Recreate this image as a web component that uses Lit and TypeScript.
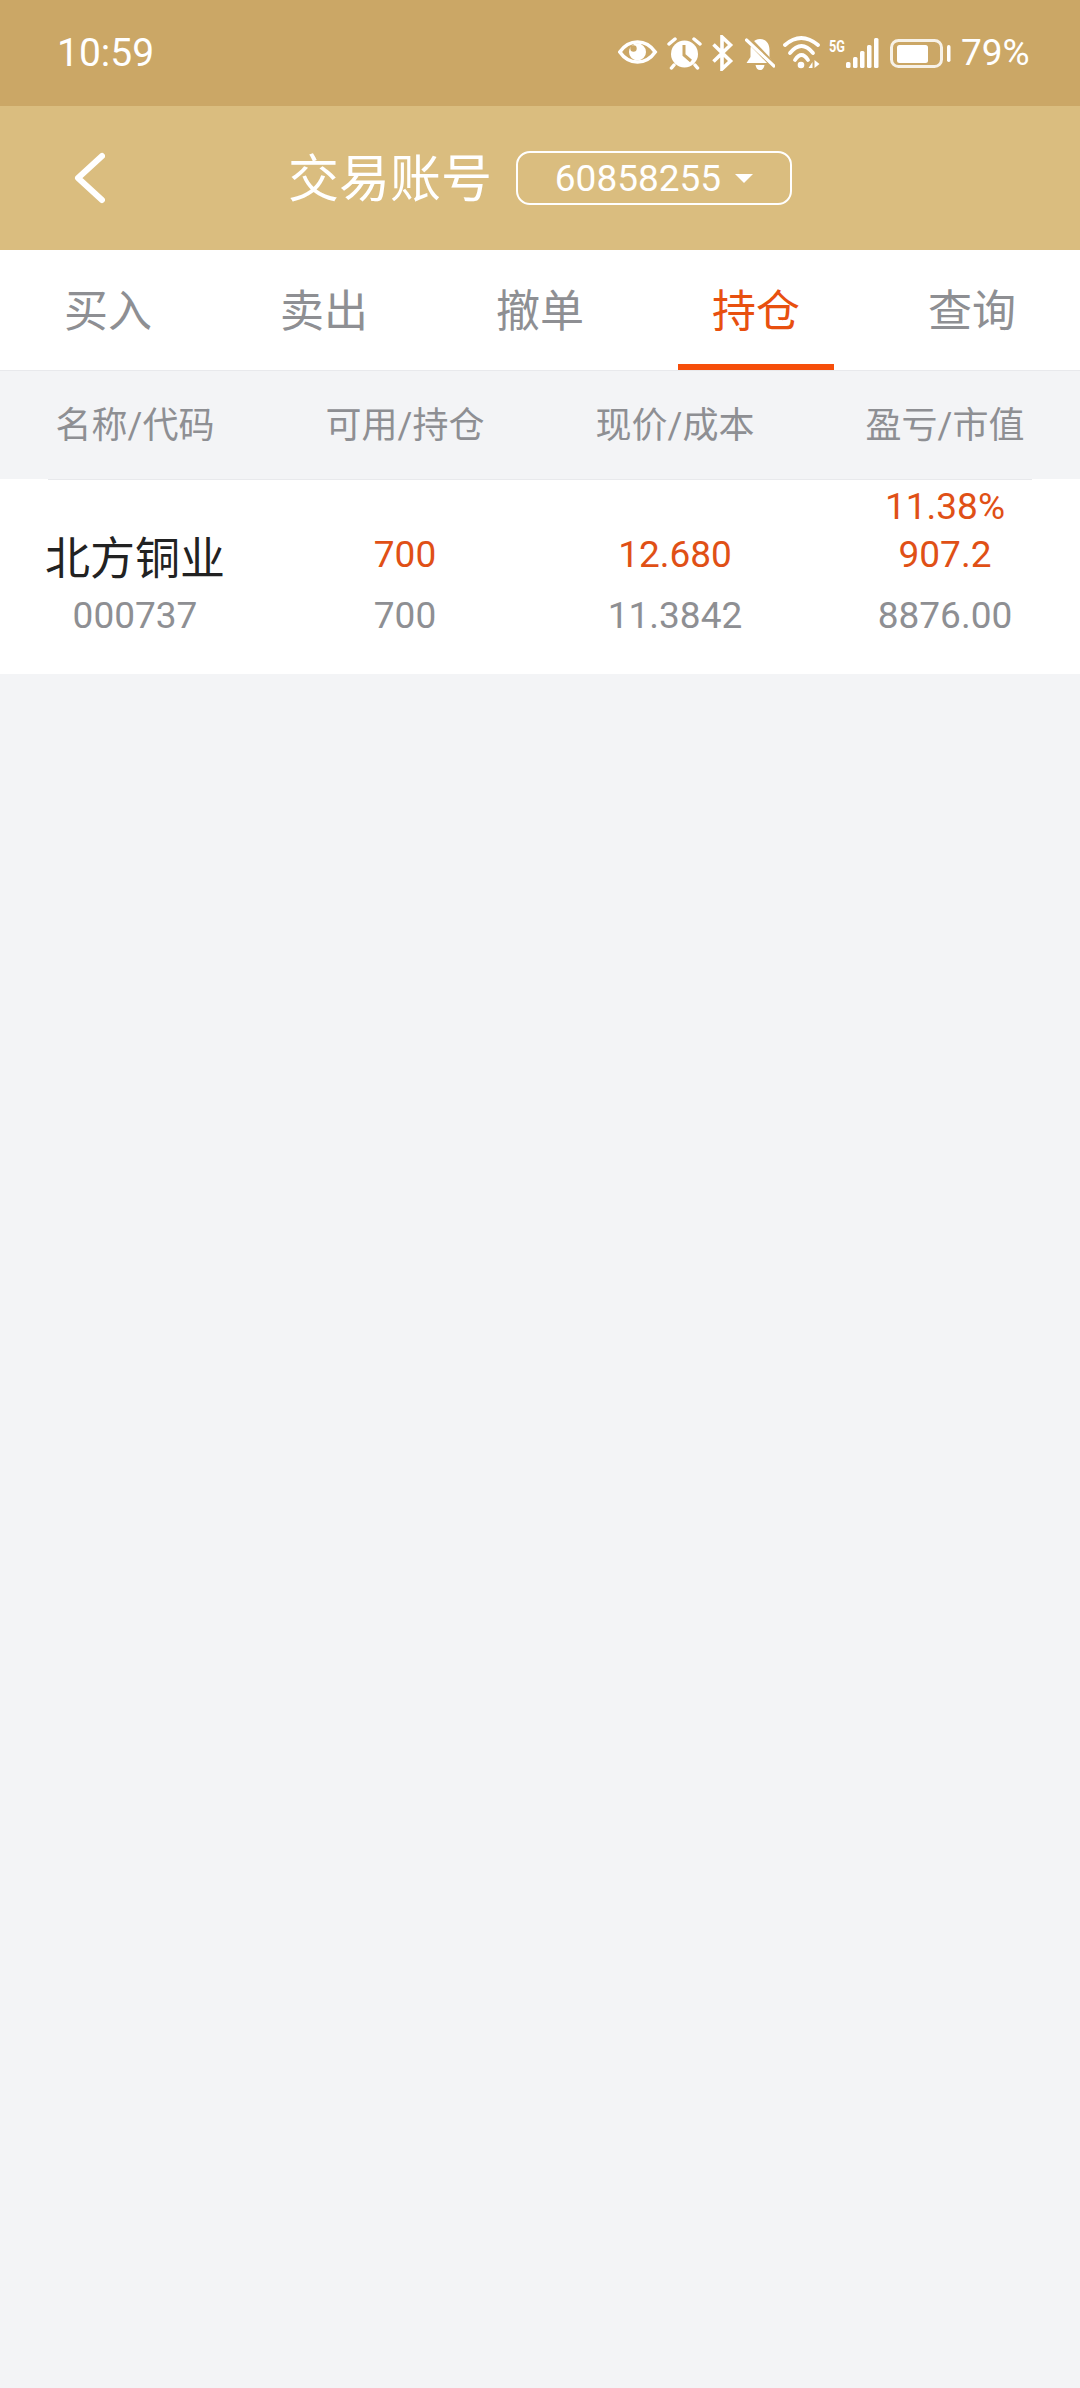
import { LitElement, html, css, svg } from "lit";
import { customElement } from "lit/decorators.js";

const eye = svg`<path d="M1.800 17C7 9.500 13 7 19.500 7S32 9.500 37.200 17C32 24.500 26 27 19.500 27S7 24.500 1.800 17Z" fill="none" stroke="#fff" stroke-width="3.600"/><circle cx="19.500" cy="17" r="8.500" fill="#fff"/><circle cx="15.500" cy="13.500" r="3.200" fill="#cba766"/>`;
const alarm = svg`<circle cx="17.500" cy="19" r="13.500" fill="#fff"/><path d="M17 10V20L24 26" fill="none" stroke="#cba766" stroke-width="3"/><path d="M2 9 8 4M27 4 33 9M7 30 4.500 33M28 30 30.500 33" stroke="#fff" stroke-width="3.500" stroke-linecap="round"/>`;
const bt = svg`<path d="M2.500 9.500 19.500 26 11 34V2L19.500 10 2.500 26.500" fill="none" stroke="#fff" stroke-width="3.600"/>`;
const bell = svg`<path d="M15 4C8.500 4 5.500 9 5.500 15V22L1.500 28H28.500L24.500 22V15C24.500 9 21.500 4 15 4Z" fill="#fff"/><path d="M10.500 30H19.500C19 33 17.500 35 15 35S11 33 10.500 30Z" fill="#fff"/><path d="M1 2 30 32" stroke="#cba766" stroke-width="6"/><path d="M1.500 5 29 31" stroke="#fff" stroke-width="3.200" stroke-linecap="round"/>`;
const wifi = svg`<g fill="none" stroke="#fff" stroke-width="3.800" stroke-linecap="round"><path d="M2 10Q18 -4 35 10"/><path d="M7 18Q18.500 4 30 18"/><path d="M12 25Q18.500 15 25 25"/></g><circle cx="18" cy="30" r="3.300" fill="#fff"/><path d="M29.500 27 25.500 33H29.500ZM31.500 25V33L36.500 29Z" fill="#fff"/>`;
const signal = svg`<text x="0" y="17" font-family="Roboto, sans-serif" font-size="16" font-weight="700" fill="#fff" textLength="16" lengthAdjust="spacingAndGlyphs">5G</text><g fill="#fff"><rect x="17" y="27" width="4.500" height="6" rx="1.500"/><rect x="24" y="22" width="4.500" height="11" rx="1.500"/><rect x="31" y="16" width="4.500" height="17" rx="1.500"/><rect x="38" y="10" width="4.500" height="23" rx="1.500"/><rect x="45" y="3" width="4.500" height="30" rx="1.500"/></g>`;
const battery = svg`<rect x="1.500" y="5.500" width="50" height="26" rx="7" fill="none" stroke="#fff" stroke-width="3" opacity=".85"/><rect x="7" y="10" width="31" height="18" rx="2.500" fill="#fff"/><rect x="57" y="10" width="3.500" height="17" rx="1.700" fill="#fff"/>`;

const icon = (w: number, body: unknown) =>
  html`<svg width=${w} height="36" viewBox="0 0 ${w} 36">${body}</svg>`;

@customElement("app-root")
export class AppRoot extends LitElement {
  static styles = css`
    :host {
      display: block;
      min-height: 2388px;
      background: #f3f4f6;
      font-family: Roboto, "Noto Sans CJK SC", sans-serif;
    }
    .status {
      height: 106px;
      box-sizing: border-box;
      background: #cba766;
      color: #fff;
      display: flex;
      align-items: center;
      justify-content: space-between;
      padding: 0 52px 0 57px;
    }
    .time { font-size: 39px; line-height: 46px; }
    .icons { display: flex; align-items: center; gap: 8px; }
    .icons svg { display: block; }
    .pct { font-size: 37px; line-height: 46px; width: 67px; white-space: nowrap; }
    .bar {
      height: 144px;
      background: #dabd7f;
      color: #fff;
      display: grid;
      grid-template-columns: 1fr auto 1fr;
      align-items: center;
    }
    .back { display: block; margin-left: 73px; }
    .account { display: flex; align-items: center; gap: 24px; }
    .title { font-size: 51px; line-height: 60px; padding-top: 3px; }
    .select {
      width: 276px;
      height: 54px;
      box-sizing: border-box;
      border: 2px solid #fff;
      border-radius: 14px;
      display: flex;
      align-items: center;
      justify-content: center;
      gap: 14px;
      font-size: 37px;
    }
    .tri {
      width: 0;
      height: 0;
      border-left: 9px solid transparent;
      border-right: 9px solid transparent;
      border-top: 9px solid #fff;
    }
    .tabs {
      height: 121px;
      box-sizing: border-box;
      background: #fff;
      border-bottom: 1px solid #e8e9ec;
      display: grid;
      grid-template-columns: repeat(5, 1fr);
    }
    .tab {
      display: flex;
      align-items: center;
      justify-content: center;
      position: relative;
      box-sizing: border-box;
      padding-bottom: 5px;
      font-size: 44px;
      color: #8e8f93;
    }
    .tab.on { color: #e8500f; }
    .tab.on::after {
      content: "";
      position: absolute;
      left: 30px;
      right: 30px;
      bottom: 0;
      height: 6px;
      background: #f64e0a;
    }
    .head {
      height: 108px;
      box-sizing: border-box;
      padding-bottom: 6px;
      display: grid;
      grid-template-columns: repeat(4, 270px);
      align-items: center;
      text-align: center;
      font-size: 36px;
      color: #8e8f93;
    }
    .row {
      height: 195px;
      box-sizing: border-box;
      background: #fff;
      display: grid;
      grid-template-columns: repeat(4, 270px);
      position: relative;
      padding-bottom: 34px;
      text-align: center;
      font-size: 37px;
      color: #8e8f93;
    }
    .row::before {
      content: "";
      position: absolute;
      left: 48px;
      right: 48px;
      top: 0;
      height: 1px;
      background: #e8e9ec;
    }
    .cell { display: flex; flex-direction: column; justify-content: flex-end; }
    .up { color: #e05016; line-height: 48px; }
    .down { line-height: 48px; margin-top: 13px; }
    .name { font-size: 45px; line-height: 56px; color: #222; white-space: nowrap; }
    .code { line-height: 48px; margin-top: 4px; }
  `;

  render() {
    return html`
      <div class="status">
        <span class="time">10:59</span>
        <div class="icons">
          ${icon(41, eye)}${icon(36, alarm)}${icon(26, bt)}${icon(30, bell)}${icon(38, wifi)}${icon(53, signal)}${icon(63, battery)}
          <span class="pct">79%</span>
        </div>
      </div>
      <div class="bar">
        <svg class="back" width="32" height="52" viewBox="0 0 32 52">
          <path d="M29 4 5 26 29 48" fill="none" stroke="#fff" stroke-width="6" stroke-linecap="round" stroke-linejoin="round"/>
        </svg>
        <div class="account">
          <span class="title">交易账号</span>
          <div class="select"><span>60858255</span><i class="tri"></i></div>
        </div>
      </div>
      <div class="tabs">
        ${["买入", "卖出", "撤单", "持仓", "查询"].map(
          (t) => html`<div class="tab ${t === "持仓" ? "on" : ""}">${t}</div>`
        )}
      </div>
      <div class="head">
        <div>名称/代码</div><div>可用/持仓</div><div>现价/成本</div><div>盈亏/市值</div>
      </div>
      <div class="row">
        <div class="cell"><div class="name">北方铜业</div><div class="code">000737</div></div>
        <div class="cell"><div class="up">700</div><div class="down">700</div></div>
        <div class="cell"><div class="up">12.680</div><div class="down">11.3842</div></div>
        <div class="cell"><div class="up">11.38%</div><div class="up">907.2</div><div class="down">8876.00</div></div>
      </div>
    `;
  }
}
